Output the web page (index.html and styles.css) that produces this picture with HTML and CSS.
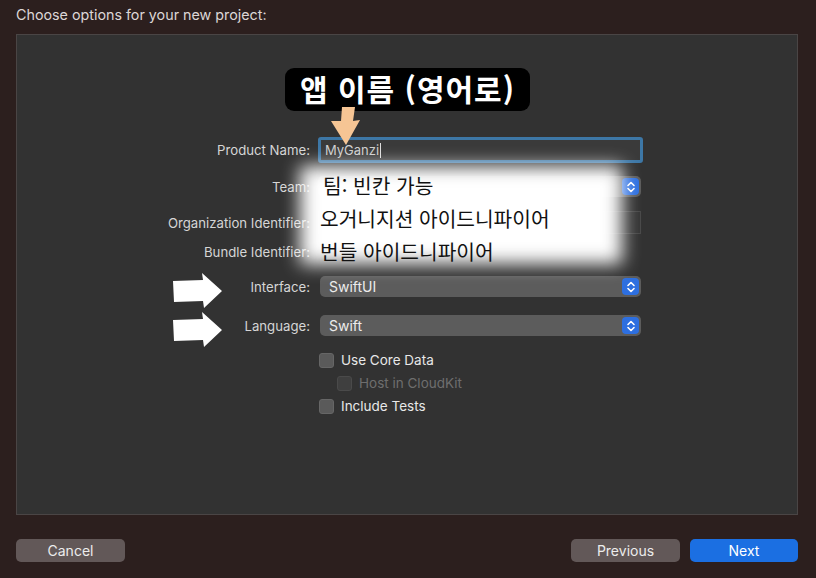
FILE: index.html
```html
<!DOCTYPE html>
<html lang="ko">
<head>
    <meta charset="UTF-8">
    <meta name="viewport" content="width=device-width, initial-scale=1.0">
    <title>Choose options for your new project</title>
    <link rel="stylesheet" href="styles.css">
</head>

<body>
    <main class="sheet">
        <h1 class="sheet-title">Choose options for your new project:</h1>

        <section class="panel">
            <div class="form">
                <div class="row row-product">
                    <span class="row-label">Product Name:</span>
                    <div class="text-field focused"><span class="field-value">MyGanzi</span><span class="caret"></span></div>
                </div>
                <div class="row row-team">
                    <span class="row-label">Team:</span>
                    <div class="popup">
                        <span class="popup-value"></span>
                        <span class="stepper">
                            <svg width="10" height="14" viewBox="0 0 10 14"><path d="M2 5.5 5 2.5 8 5.5M2 8.5 5 11.5 8 8.5" fill="none" stroke="#fff" stroke-width="1.6" stroke-linecap="round" stroke-linejoin="round"/></svg>
                        </span>
                    </div>
                </div>
                <div class="row row-org">
                    <span class="row-label">Organization Identifier:</span>
                    <div class="text-field plain"></div>
                </div>
                <div class="row row-bundle">
                    <span class="row-label">Bundle Identifier:</span>
                    <span class="static-value"></span>
                </div>
                <div class="row row-interface">
                    <span class="row-label">Interface:</span>
                    <div class="popup">
                        <span class="popup-value">SwiftUI</span>
                        <span class="stepper">
                            <svg width="10" height="14" viewBox="0 0 10 14"><path d="M2 5.5 5 2.5 8 5.5M2 8.5 5 11.5 8 8.5" fill="none" stroke="#fff" stroke-width="1.6" stroke-linecap="round" stroke-linejoin="round"/></svg>
                        </span>
                    </div>
                </div>
                <div class="row row-language">
                    <span class="row-label">Language:</span>
                    <div class="popup">
                        <span class="popup-value">Swift</span>
                        <span class="stepper">
                            <svg width="10" height="14" viewBox="0 0 10 14"><path d="M2 5.5 5 2.5 8 5.5M2 8.5 5 11.5 8 8.5" fill="none" stroke="#fff" stroke-width="1.6" stroke-linecap="round" stroke-linejoin="round"/></svg>
                        </span>
                    </div>
                </div>
                <label class="check check-first">
                    <span class="check-box"></span>
                    <span class="check-text">Use Core Data</span>
                </label>
                <label class="check check-sub disabled">
                    <span class="check-box"></span>
                    <span class="check-text">Host in CloudKit</span>
                </label>
                <label class="check">
                    <span class="check-box"></span>
                    <span class="check-text">Include Tests</span>
                </label>
            </div>
        </section>

        <footer class="sheet-footer">
            <button class="btn">Cancel</button>
            <div class="btn-group">
                <button class="btn">Previous</button>
                <button class="btn btn-primary">Next</button>
            </div>
        </footer>
    </main>

    <!-- annotations drawn over the screenshot -->
    <div class="note-glow"></div>
    <div class="note-lines">
        <p class="note-line note-team">팀: 빈칸 가능</p>
        <p class="note-line note-org">오거니지션 아이드니파이어</p>
        <p class="note-line note-bundle">번들 아이드니파이어</p>
    </div>

    <div class="note-tag">앱 이름 (영어로)</div>

    <svg class="note-arrow-down" width="40" height="44" viewBox="0 0 40 44">
        <polygon points="13,0 26,0 24,14 31,13 17,38 2,14 12,14" fill="#f6c594"/>
    </svg>

    <svg class="note-arrow arrow-interface" width="52" height="38" viewBox="0 0 52 38">
        <polygon points="0,8 30,7 29,0 49,18 31,35 30,28 1,29" fill="#fff"/>
    </svg>
    <svg class="note-arrow arrow-language" width="52" height="38" viewBox="0 0 52 38">
        <polygon points="0,8 30,7 29,0 49,18 31,35 30,28 1,29" fill="#fff"/>
    </svg>
</body>
</html>
```

FILE: styles.css
```css
:root {
    --color-bg: #2c1f1e;
    --color-panel: #323232;
    --color-panel-border: #4a4545;
    --color-label: #d6d6d6;
    --color-text: #e8e8e8;
    --color-popup: #5c5c5c;
    --color-blue: #2d6fe0;
    --color-button: #625858;
    --color-next: #1b6fe2;
}

* {
    margin: 0;
    padding: 0;
    box-sizing: border-box;
}

body {
    position: relative;
    width: 816px;
    height: 578px;
    overflow: hidden;
    background-color: var(--color-bg);
    font-family: "Inter", "Noto Sans", sans-serif;
    color: var(--color-text);
}

.sheet {
    display: flex;
    flex-direction: column;
}

.sheet-title {
    height: 34px;
    padding-left: 16px;
    line-height: 30px;
    font-size: 14.3px;
    font-weight: 400;
    color: #dcd6d6;
}

.panel {
    margin: 0 18px 0 16px;
    height: 481px;
    background-color: var(--color-panel);
    border: 1px solid var(--color-panel-border);
}

.form {
    display: flex;
    flex-direction: column;
    padding-top: 102px;
}

.row {
    display: flex;
    align-items: center;
    gap: 8px;
}

.row-label {
    width: 293px;
    text-align: right;
    font-size: 13.2px;
    color: var(--color-label);
}

.row-product { height: 26px; }
.row-team { height: 21px; margin-top: 13px; }
.row-org { height: 23px; margin-top: 14px; }
.row-bundle { height: 22px; margin-top: 7px; }
.row-interface { height: 21px; margin-top: 13px; }
.row-language { height: 21px; margin-top: 18px; }

.text-field {
    width: 325px;
    height: 100%;
    display: flex;
    align-items: center;
    padding-left: 4px;
    font-size: 13px;
}

.text-field.focused {
    background-color: #3a3a3a;
    border: 3px solid #3d77a6;
    border-radius: 3px;
    color: #cfcfcf;
}

.text-field.plain {
    width: 323px;
    background-color: #353535;
    border: 1px solid #484848;
}

.caret {
    width: 1px;
    height: 15px;
    margin-left: 1px;
    background-color: #ddd;
}

.popup {
    width: 323px;
    height: 100%;
    display: flex;
    align-items: center;
    justify-content: space-between;
    padding: 0 2px 0 9px;
    background-color: var(--color-popup);
    border-radius: 5px;
    font-size: 14px;
    color: #ececec;
}

.row-interface .popup,
.row-language .popup {
    margin-left: 2px;
    width: 321px;
}

.stepper {
    width: 17px;
    height: 17px;
    display: flex;
    align-items: center;
    justify-content: center;
    background-color: var(--color-blue);
    border-radius: 4px;
}

.check {
    display: flex;
    align-items: center;
    gap: 7px;
    height: 16px;
    margin-top: 7px;
    padding-left: 302px;
    font-size: 13.5px;
    color: var(--color-text);
}

.check-first { margin-top: 16px; }

.check-sub { padding-left: 320px; }

.check-box {
    width: 15px;
    height: 15px;
    background-color: #5a5a5a;
    border: 1px solid #666;
    border-radius: 3px;
}

.check.disabled { color: #6e6e6e; }

.check.disabled .check-box {
    background-color: #3f3f3f;
    border-color: #4a4a4a;
}

.sheet-footer {
    display: flex;
    justify-content: space-between;
    padding: 24px 18px 0 16px;
}

.btn-group {
    display: flex;
    gap: 10px;
}

.btn {
    width: 109px;
    height: 23px;
    border: none;
    border-radius: 5px;
    background-color: var(--color-button);
    color: #ececec;
    font-family: "Inter", sans-serif;
    font-size: 14px;
}

.btn-primary {
    width: 108px;
    background-color: var(--color-next);
    color: #fff;
}

/* annotations */
.note-glow {
    position: absolute;
    left: 300px;
    top: 166px;
    width: 322px;
    height: 98px;
    background-color: #fff;
    filter: blur(9px);
}

.note-lines {
    position: absolute;
    left: 320px;
    top: 171px;
    font-family: "Noto Sans CJK KR", sans-serif;
    font-size: 20.3px;
    color: #111;
}

.note-line {
    height: 33px;
    line-height: 29px;
}

.note-team { padding-left: 3px; }

.note-tag {
    position: absolute;
    left: 285px;
    top: 68px;
    width: 245px;
    height: 43px;
    background-color: #000;
    border-radius: 9px;
    text-align: center;
    line-height: 40px;
    font-family: "Noto Sans CJK KR", sans-serif;
    font-size: 30px;
    font-weight: 700;
    letter-spacing: 1px;
    color: #fff;
}

.note-arrow-down {
    position: absolute;
    left: 329px;
    top: 107px;
}

.note-arrow {
    position: absolute;
    left: 173px;
}

.arrow-interface { top: 273px; }
.arrow-language { top: 312px; }
```
